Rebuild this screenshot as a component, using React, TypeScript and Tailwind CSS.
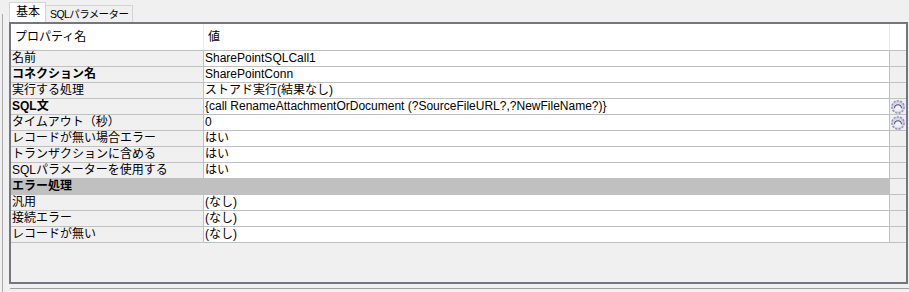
import React from "react";

type Row = {
  name: string;
  value?: string;
  bold?: boolean;
  group?: boolean;
  button?: boolean;
};

const rows: Row[] = [
  { name: "名前", value: "SharePointSQLCall1" },
  { name: "コネクション名", value: "SharePointConn", bold: true },
  { name: "実行する処理", value: "ストアド実行(結果なし)" },
  {
    name: "SQL文",
    value: "{call RenameAttachmentOrDocument (?SourceFileURL?,?NewFileName?)}",
    bold: true,
    button: true,
  },
  { name: "タイムアウト（秒）", value: "0", button: true },
  { name: "レコードが無い場合エラー", value: "はい" },
  { name: "トランザクションに含める", value: "はい" },
  { name: "SQLパラメーターを使用する", value: "はい" },
  { name: "エラー処理", group: true, bold: true },
  { name: "汎用", value: "(なし)" },
  { name: "接続エラー", value: "(なし)" },
  { name: "レコードが無い", value: "(なし)" },
];

function GearButton() {
  return (
    <svg width="14" height="14" viewBox="0 0 14 14">
      <circle cx="7" cy="7" r="6.2" fill="#cfcfe6" stroke="#8e8eb4" strokeWidth="1.3" strokeDasharray="2.2 1.2" />
      <circle cx="7" cy="7.4" r="4" fill="#ececf8" />
      <path d="M3.6 8.2 A3.4 3.4 0 0 1 10.4 8.2" fill="none" stroke="#4f4f72" strokeWidth="1.1" />
      <path d="M4.2 8.2 L9.8 8.2" stroke="#ffffff" strokeWidth="1" />
    </svg>
  );
}

export default function App() {
  return (
    <div
      className="w-[909px] h-[292px] overflow-hidden bg-[#f0f0f0] text-[12px] leading-[15px] text-black flex"
      style={{ fontFamily: '"Liberation Sans", "Noto Sans CJK JP", sans-serif' }}
    >
      <div className="w-[2px]" />
      <div className="mt-[14px] w-px bg-[#a9a9a9]" />
      <div className="flex-1 flex flex-col">
        {/* tabs */}
        <div className="h-[22px] flex items-end pl-[6px] pt-[2px]">
          <div className="h-[20px] pl-[6px] pr-[5px] bg-white border border-b-0 border-[#d4d4d4] flex items-center">
            基本
          </div>
          <div className="h-[17px] px-[4px] border border-l-0 border-b-0 border-[#d4d4d4] bg-[#f0f0f0] flex items-center text-[10.5px] tracking-[-0.6px]">
            SQLパラメーター
          </div>
          <div className="flex-1" />
        </div>

        {/* property grid */}
        <div className="ml-[6px] mr-[1px] h-[262px] border-2 border-[#75757f] bg-[#f0f0f0] flex flex-col">
          <div className="grid grid-cols-[193px_686px_1fr] h-[27px] bg-white border-b border-[#c0c0c0]">
            <div className="pl-[4px] flex items-center border-r border-[#ececec]">プロパティ名</div>
            <div className="pl-[4px] flex items-center border-r border-[#e6e6e6]">値</div>
            <div />
          </div>
          {rows.map((r) => (
            <div
              key={r.name}
              className="grid grid-cols-[193px_686px_1fr] h-[16px] border-b border-[#c0c0c0]"
            >
              {r.group ? (
                <div className="col-span-2 bg-[#c0c0c0] border-r border-[#c0c0c0] pl-[1px] font-bold">
                  {r.name}
                </div>
              ) : (
                <>
                  <div className={`bg-[#f0f0f0] border-r border-[#c0c0c0] pl-[1px] whitespace-nowrap ${r.bold ? "font-bold" : ""}`}>
                    {r.name}
                  </div>
                  <div className="bg-white border-r border-[#c0c0c0] pl-[1px] whitespace-nowrap">{r.value}</div>
                </>
              )}
              <div className="bg-[#f0f0f0] flex items-center justify-center">
                {r.button ? <GearButton /> : null}
              </div>
            </div>
          ))}
        </div>

        <div className="ml-[7px] mt-[4px] border-t border-[#a0a0a0] flex-1 bg-[#f0f0f0]" />
      </div>
    </div>
  );
}
